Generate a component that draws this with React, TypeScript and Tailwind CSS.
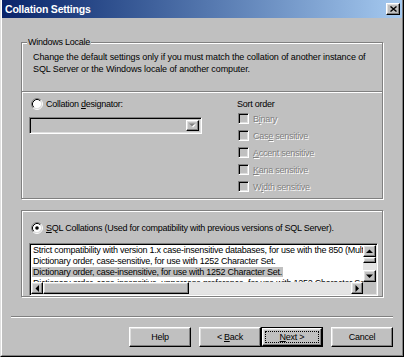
import React from 'react'

const raised =
  'border border-white border-r-black border-b-black shadow-[inset_-1px_-1px_0_#808080,inset_1px_1px_0_#dfdfdf] bg-[#c0c0c0]'
const sunken =
  'border border-[#808080] border-r-white border-b-white shadow-[inset_1px_1px_0_#000,inset_-1px_-1px_0_#dfdfdf]'
const etched = 'border border-[#808080] shadow-[inset_1px_1px_0_#fff,1px_1px_0_#fff]'
const disabledText = 'text-[#808080] [text-shadow:1px_1px_0_#fff]'

function Radio({ checked }: { checked?: boolean }) {
  return (
    <svg width="12" height="12" viewBox="0 0 12 12" className="shrink-0">
      <circle cx="6" cy="6" r="4.5" fill="#fff" />
      <path d="M2.11 9.89A5.5 5.5 0 0 1 9.89 2.11" fill="none" stroke="#808080" />
      <path d="M9.89 2.11A5.5 5.5 0 0 1 2.11 9.89" fill="none" stroke="#fff" />
      <path d="M2.82 9.18A4.5 4.5 0 0 1 9.18 2.82" fill="none" stroke="#000" />
      <path d="M9.18 2.82A4.5 4.5 0 0 1 2.82 9.18" fill="none" stroke="#dfdfdf" />
      {checked && <circle cx="6" cy="6" r="1.8" fill="#000" />}
    </svg>
  )
}

function Arrow({ dir, color = '#000' }: { dir: 'up' | 'down' | 'left' | 'right'; color?: string }) {
  const d = {
    up: 'M0 4L3.5 0.5L7 4Z',
    down: 'M0 0.5L7 0.5L3.5 4Z',
    left: 'M4 0L0.5 3.5L4 7Z',
    right: 'M0.5 0L4 3.5L0.5 7Z',
  }[dir]
  const vertical = dir === 'up' || dir === 'down'
  return (
    <svg width={vertical ? 7 : 5} height={vertical ? 5 : 7} viewBox={vertical ? '0 0 7 5' : '0 0 5 7'}>
      <path d={d} fill={color} />
    </svg>
  )
}

function Check({ label, u }: { label: string; u: number }) {
  return (
    <div className="h-[17px] flex items-center">
      <div className={`w-[11px] h-[11px] bg-[#c0c0c0] ${sunken}`} />
      <span className={`ml-[4px] ${disabledText}`}>
        {label.slice(0, u)}
        <span className="underline">{label[u]}</span>
        {label.slice(u + 1)}
      </span>
    </div>
  )
}

function Button({ children, primary }: { children: React.ReactNode; primary?: boolean }) {
  if (primary) {
    return (
      <div className="w-[62px] h-[20px] border border-black">
        <div className={`h-full ${raised} flex items-center justify-center p-[2px]`}>
          <div className="w-full h-full border border-dotted border-black flex items-center justify-center">
            {children}
          </div>
        </div>
      </div>
    )
  }
  return <div className={`w-[62px] h-[20px] ${raised} flex items-center justify-center`}>{children}</div>
}

const rows = [
  'Strict compatibility with version 1.x case-insensitive databases, for use with the 850 (Multilingual) Character Set.',
  'Dictionary order, case-sensitive, for use with 1252 Character Set.',
  'Dictionary order, case-insensitive, for use with 1252 Character Set.',
  'Dictionary order, case-insensitive, uppercase preference, for use with 1252 Character Set.',
]

export default function App() {
  return (
    <div className="w-[404px] h-[357px] bg-[#c0c0c0] border-l border-l-[#dfdfdf] border-r border-r-black border-b border-b-black font-['Liberation_Sans',Arial,sans-serif] text-[9px] leading-[12px] text-black overflow-hidden tracking-[-0.25px]">
      <div className="h-full border-l border-l-white border-r border-r-[#808080] border-b border-b-[#808080] flex flex-col">
        <div className="h-[18px] shrink-0 bg-gradient-to-r from-[#0a246a] to-[#a6caf0] flex items-center justify-between pl-[3px] pr-[2px]">
          <span className="text-white font-bold text-[10.5px] tracking-[-0.2px]">Collation Settings</span>
          <div className={`w-[14px] h-[12px] ${raised} flex items-center justify-center`}>
            <svg width="7" height="6" viewBox="0 0 7 6">
              <path d="M0.5 0.5L6.5 5.5M6.5 0.5L0.5 5.5" stroke="#000" strokeWidth="1.4" />
            </svg>
          </div>
        </div>

        <div className="flex-1 px-[9px]">
          {/* Windows Locale */}
          <div className={`relative mx-[10px] mt-[24px] h-[157px] ${etched} flex flex-col`}>
            <span className="absolute left-[5px] -top-[7px] px-[1px] bg-[#c0c0c0] leading-[13px]">Windows Locale</span>
            <div className="h-[48px] pt-[8px] pl-[11px] tracking-[-0.1px]">
              <p>Change the default settings only if you must match the collation of another instance of</p>
              <p>SQL Server or the Windows locale of another computer.</p>
            </div>
            <div className="h-[2px] border-t border-t-[#808080] border-b border-b-white" />
            <div className="flex-1 pt-[4px] flex">
              <div className="w-[215px] pl-[7px]">
                <div className="h-[13px] pl-[2px] flex items-center gap-[3px]">
                  <Radio />
                  <span>
                    Collation <span className="underline">d</span>esignator:
                  </span>
                </div>
                <div className={`mt-[7px] w-[173px] h-[17px] bg-[#c0c0c0] ${sunken} p-[2px] flex justify-end`}>
                  <div className={`w-[13px] h-full ${raised} flex items-center justify-center`}>
                    <svg width="7" height="5" viewBox="0 0 7 5">
                      <path d="M1 1.5L7 1.5L4 4.5Z" fill="#fff" />
                      <path d="M0 0.5L6 0.5L3 3.5Z" fill="#808080" />
                    </svg>
                  </div>
                </div>
              </div>
              <div className="flex-1 pl-[1px]">
                <div className="h-[13px] -ml-[1px] flex items-center">Sort order</div>
                <Check label="Binary" u={1} />
                <Check label="Case sensitive" u={3} />
                <Check label="Accent sensitive" u={0} />
                <Check label="Kana sensitive" u={0} />
                <Check label="Width sensitive" u={1} />
              </div>
            </div>
          </div>

          {/* SQL Collations */}
          <div className={`relative mx-[10px] mt-[11px] h-[87px] ${etched} pt-[10px]`}>
            <div className="h-[13px] pl-[9px] flex items-center gap-[3px]">
              <Radio checked />
              <span>
                <span className="underline">S</span>QL Collations (Used for compatibility with previous versions of SQL Server).
              </span>
            </div>
            <div className={`mt-[9px] ml-[7px] w-[349px] h-[53px] bg-white ${sunken} p-[1px] grid grid-cols-[1fr_13px] grid-rows-[37px_12px]`}>
              <div className="overflow-hidden pl-[1px] whitespace-nowrap">
                {rows.map((r, i) => (
                  <div key={i} className="h-[11px] leading-[11px]">
                    <span className={i === 2 ? 'bg-[#c0c0c0] px-[1px]' : 'px-[1px]'}>{r}</span>
                  </div>
                ))}
              </div>
              <div className="flex flex-col bg-[#e4e4e4]">
                <div className={`h-[12px] ${raised} flex items-center justify-center`}>
                  <Arrow dir="up" />
                </div>
                <div className={`h-[6px] ${raised}`} />
                <div className="flex-1" />
                <div className={`h-[12px] ${raised} flex items-center justify-center`}>
                  <Arrow dir="down" />
                </div>
              </div>
              <div className="flex bg-[#e4e4e4]">
                <div className={`w-[12px] ${raised} flex items-center justify-center`}>
                  <Arrow dir="left" />
                </div>
                <div className={`w-[146px] ${raised}`} />
                <div className="flex-1" />
                <div className={`w-[12px] ${raised} flex items-center justify-center`}>
                  <Arrow dir="right" />
                </div>
              </div>
              <div className="bg-[#c0c0c0]" />
            </div>
          </div>

          <div className="mt-[19px] h-[2px] border-t border-t-[#808080] border-b border-b-white" />

          <div className="mt-[9px] flex justify-end gap-[8px]">
            <Button>Help</Button>
            <div className="flex">
              <Button>
                &lt; <span className="underline ml-[2px]">B</span>ack
              </Button>
              <Button primary>
                <span className="underline">N</span>ext &gt;
              </Button>
            </div>
            <Button>Cancel</Button>
          </div>
        </div>
      </div>
    </div>
  )
}
